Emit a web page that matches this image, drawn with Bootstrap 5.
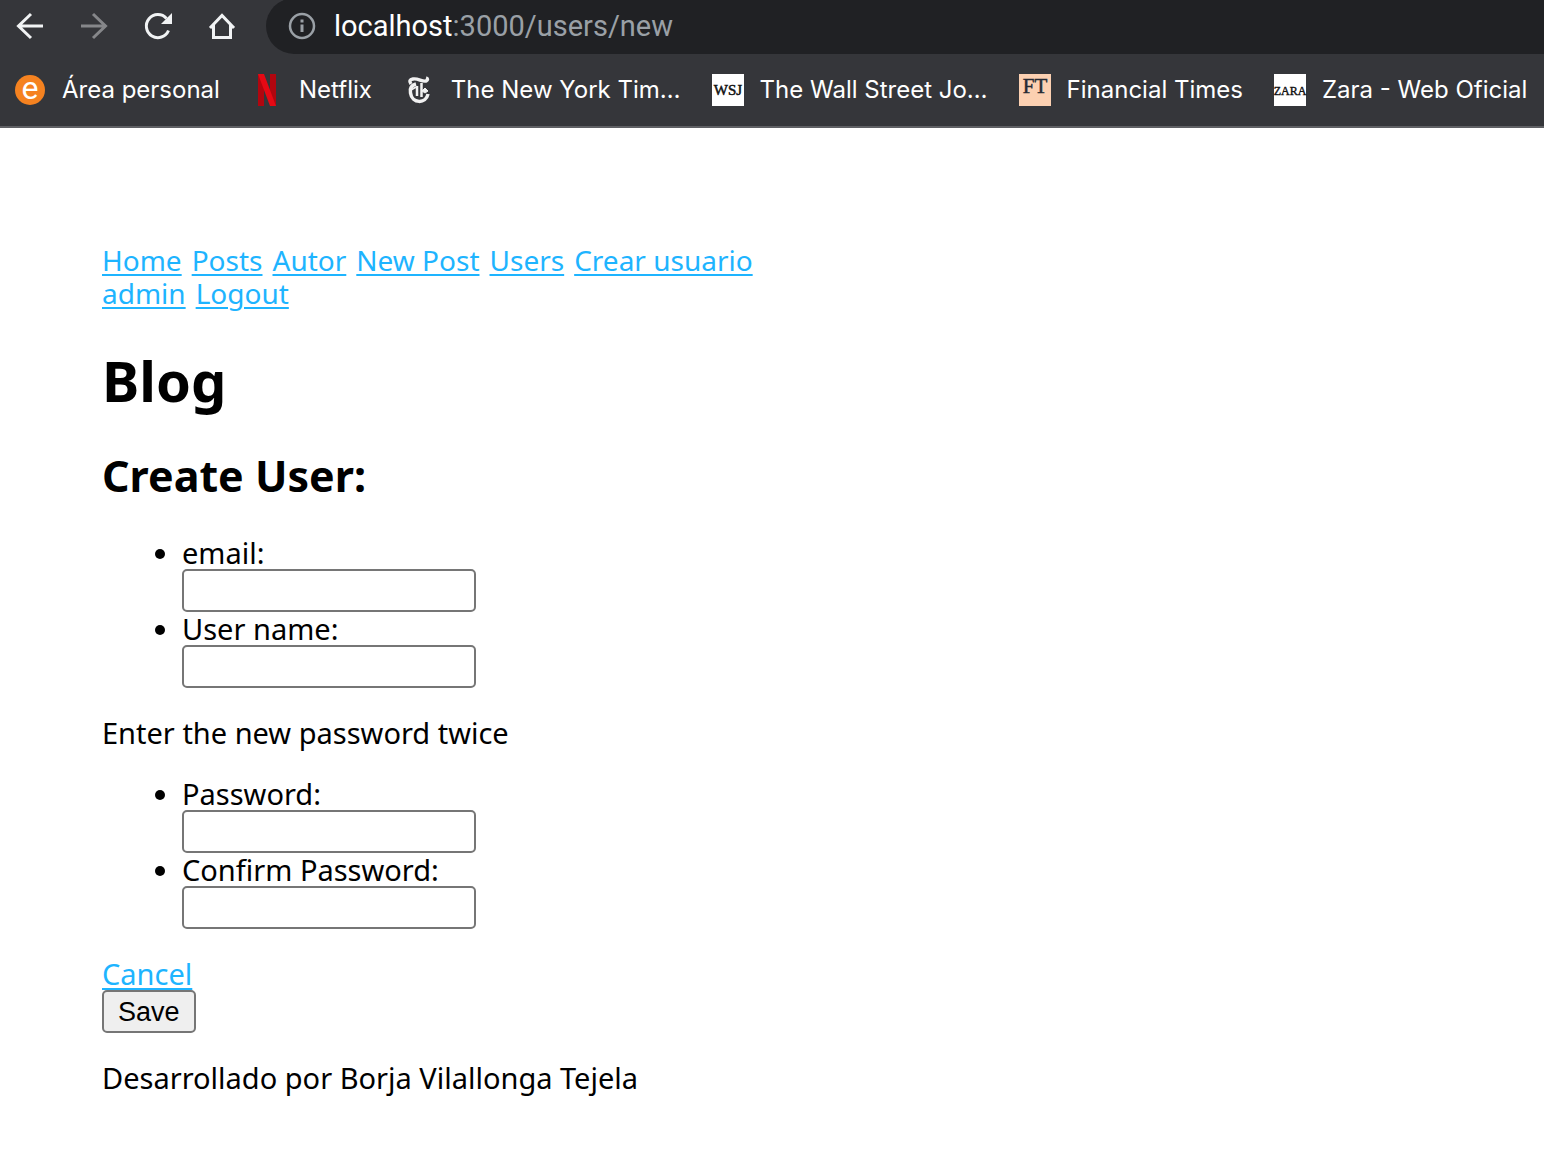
<!DOCTYPE html>
<html lang="es">
<head>
<meta charset="utf-8">
<meta name="viewport" content="width=device-width, initial-scale=1">
<title>Blog</title>
<link href="https://cdn.jsdelivr.net/npm/bootstrap@5.3.0/dist/css/bootstrap.min.css" rel="stylesheet">
<style>
  body { font-family: "Noto Sans", sans-serif; font-size: 29px; line-height: 33px; color: #000; background: #fff; }
  .browser-bar { background: #35363a; border-bottom: 2px solid #5f6064; height: 128px; overflow: hidden; font-family: Inter, Roboto, sans-serif; color: #fff; }
  .tool-row { height: 54px; padding-left: 14px; }
  .tool-btn { width: 32px; height: 32px; margin-right: 32px; color: #f1f3f4; }
  .tool-btn:disabled { color: #86878a; }
  .tool-btn svg { display: block; }
  .omnibox { height: 56px; margin: -2px -40px 0 -4px; padding-left: 20px; gap: 16px; border-radius: 28px; background: #202124; }
  .url-text { font-family: Roboto, sans-serif; font-size: 29px; line-height: 34px; color: #9aa0a6; }
  .url-text span { color: #fff; }
  .bookmark-row { height: 72px; padding-left: 14px; gap: 31px; font-size: 24px; line-height: 32px; }
  .bookmark { color: #fff; gap: 16px; white-space: nowrap; text-decoration: none; }
  .bookmark svg { overflow: visible; }
  .page-body { padding: 116px 102px 40px; }
  .page-column { max-width: 680px; }
  .page-body a { color: #1eb4ff; text-decoration-thickness: 2px; text-underline-offset: 3px; }
  .site-links { font-size: 28px; column-gap: 10px; }
  .page-body h1 { font-size: 56px; line-height: 66px; font-weight: 700; margin: 37px 0 38px; }
  .page-body h2 { font-size: 43px; line-height: 50px; font-weight: 700; margin: 0 0 35px; }
  .page-body ul { padding-left: 80px; margin: 0 0 28px; }
  .page-body p { margin: 0 0 28px; }
  .field-box { width: 294px; height: 43px; padding: 2px 4px; border: 2px solid #767676; border-radius: 5px; font-size: 26px; }
  .save-btn { height: 43px; margin-bottom: 28px; padding: 0 14px; border: 2px solid #767676; border-radius: 5px; background: #efefef; color: #000; font: 27px/36px "Liberation Sans", sans-serif; }
</style>
<script src="https://cdn.jsdelivr.net/npm/bootstrap@5.3.0/dist/js/bootstrap.bundle.min.js"></script>
</head>
<body>
<header class="browser-bar">
  <div class="tool-row d-flex align-items-center">
    <button type="button" class="tool-btn flex-shrink-0 border-0 bg-transparent p-0" aria-label="Back"><svg width="32" height="32" fill="none" stroke="currentColor" stroke-width="3"><path d="M29 15H5M17 3L4.500 15L17 27"/></svg></button>
    <button type="button" class="tool-btn flex-shrink-0 border-0 bg-transparent p-0" aria-label="Forward" disabled><svg width="32" height="32" fill="none" stroke="currentColor" stroke-width="3"><path d="M3 15H27M15 3L27.500 15L15 27"/></svg></button>
    <button type="button" class="tool-btn flex-shrink-0 border-0 bg-transparent p-0" aria-label="Reload"><svg width="32" height="32"><path d="M26.500 19.500A11.500 11.500 0 1 1 24.500 7.500" fill="none" stroke="currentColor" stroke-width="3"/><path d="M30 2V13H19Z" fill="currentColor"/></svg></button>
    <button type="button" class="tool-btn flex-shrink-0 border-0 bg-transparent p-0" aria-label="Home"><svg width="32" height="32" fill="none" stroke="currentColor" stroke-width="3"><path d="M4 17L16 4.500L28 17M7.500 13.500V26.500H24.500V13.500"/></svg></button>
    <div class="omnibox d-flex align-items-center flex-grow-1">
      <svg class="flex-shrink-0" width="32" height="32" fill="none" stroke="#9aa0a6"><circle cx="16" cy="16" r="12" stroke-width="2.500"/><path d="M16 14.500V22M16 9.500V12.500" stroke-width="3"/></svg>
      <div class="url-text"><span>localhost</span>:3000/users/new</div>
    </div>
  </div>
  <nav class="bookmark-row d-flex align-items-center" aria-label="Bookmarks">
    <a href="#" class="bookmark d-flex align-items-center"><svg width="32" height="32"><circle cx="16" cy="16" r="15" fill="#f58220"/><text x="16" y="25" text-anchor="middle" font-family="Roboto, sans-serif" font-size="32" fill="#fff">e</text></svg>Área personal</a>
    <a href="#" class="bookmark d-flex align-items-center"><svg width="32" height="32"><path d="M7 0h6v32H7zM19 0h6v32h-6z" fill="#b1060f"/><path d="M7 0h6l12 32h-6z" fill="#e50914"/></svg>Netflix</a>
    <a href="#" class="bookmark d-flex align-items-center"><svg width="32" height="32" fill="none" stroke="#f1f1f1"><path d="M8 10Q5 6 10 5C15 4 19 8 23 7Q26 5 23 4" stroke-width="3.500"/><path d="M13 10Q6 12 7.500 19C9 30 23 30 25 20" stroke-width="3.500"/><path d="M14 12V22M18.500 9V23" stroke-width="2.500"/><path d="M19 17L22 14L25 17L22 19Z" fill="#f1f1f1" stroke-width="1"/><path d="M8 16L13 13" stroke-width="2"/></svg>The New York Tim…</a>
    <a href="#" class="bookmark d-flex align-items-center"><svg width="32" height="32"><path d="M0 0h32v32H0z" fill="#fff"/><text x="16" y="21" text-anchor="middle" font-family="Liberation Serif, serif" font-size="15" fill="#111" stroke="#111" stroke-width=".5">WSJ</text></svg>The Wall Street Jo…</a>
    <a href="#" class="bookmark d-flex align-items-center"><svg width="32" height="32"><path d="M0 0h32v32H0z" fill="#fcd0b1"/><text x="16" y="19" text-anchor="middle" font-family="Liberation Serif, serif" font-size="21" fill="#262a33" stroke="#262a33" stroke-width=".5">FT</text></svg>Financial Times</a>
    <a href="#" class="bookmark d-flex align-items-center"><svg width="32" height="32"><path d="M0 0h32v32H0z" fill="#fff"/><text x="16" y="21" text-anchor="middle" font-family="Liberation Serif, serif" font-size="12" fill="#111" stroke="#111" stroke-width=".4">ZARA</text></svg>Zara - Web Oficial</a>
  </nav>
</header>
<main class="page-body">
  <div class="page-column">
    <nav class="site-links d-flex flex-wrap" aria-label="Main">
      <a href="#">Home</a> <a href="#">Posts</a> <a href="#">Autor</a> <a href="#">New Post</a> <a href="#">Users</a> <a href="#">Crear usuario</a>
      <a href="#">admin</a> <a href="#">Logout</a>
    </nav>
    <h1>Blog</h1>
    <h2>Create User:</h2>
    <form>
      <ul>
        <li><label class="d-block" for="email">email:</label><input class="field-box d-block" type="email" id="email"></li>
        <li><label class="d-block" for="username">User name:</label><input class="field-box d-block" type="text" id="username"></li>
      </ul>
      <p>Enter the new password twice</p>
      <ul>
        <li><label class="d-block" for="password">Password:</label><input class="field-box d-block" type="password" id="password"></li>
        <li><label class="d-block" for="confirm">Confirm Password:</label><input class="field-box d-block" type="password" id="confirm"></li>
      </ul>
      <a href="#">Cancel</a>
      <button type="submit" class="save-btn d-block">Save</button>
    </form>
    <footer>Desarrollado por Borja Vilallonga Tejela</footer>
  </div>
</main>
</body>
</html>
